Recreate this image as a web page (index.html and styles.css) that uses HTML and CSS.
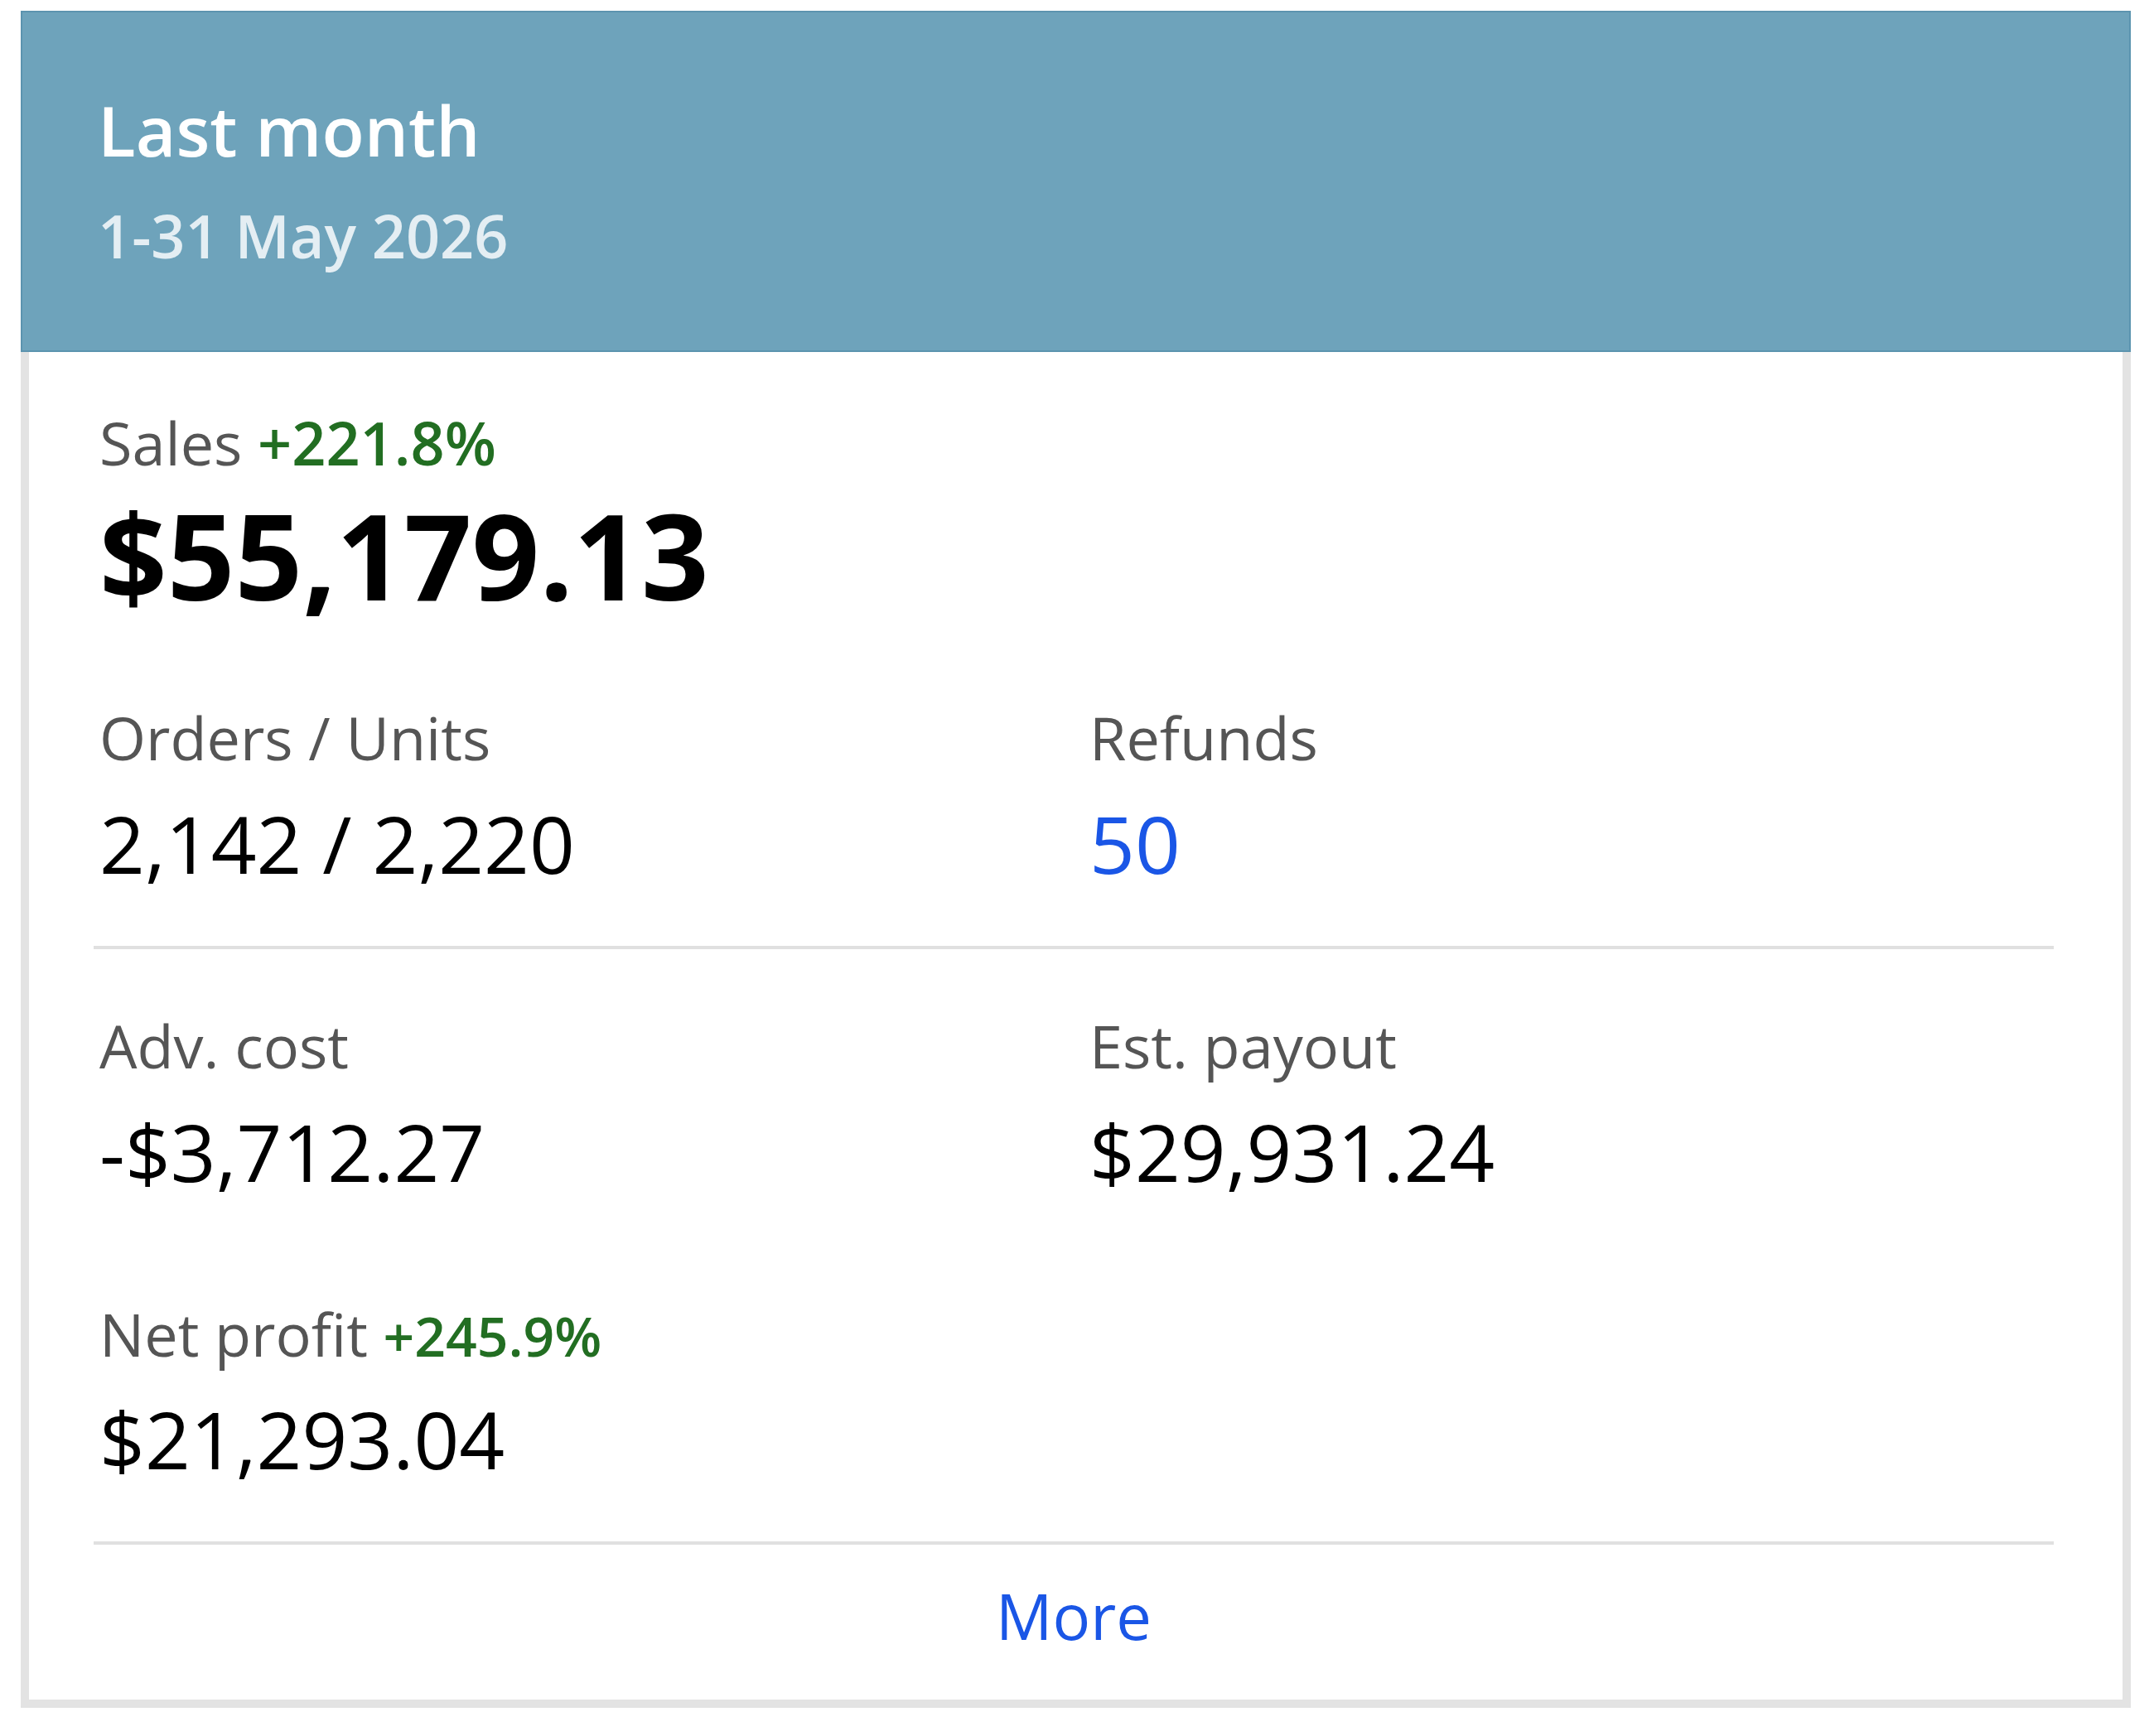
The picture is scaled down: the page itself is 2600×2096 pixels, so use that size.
FILE: index.html
```html
<!DOCTYPE html>
<html lang="en">
<head>
    <meta charset="UTF-8">
    <meta name="viewport" content="width=device-width, initial-scale=1.0">
    <title>Last month</title>
    <link rel="stylesheet" href="styles.css">
</head>
<body>
    <div class="card">
        <div class="card-head">
            <h2 class="period">Last month</h2>
            <p class="range">1-31 May 2026</p>
        </div>
        <div class="card-body">
            <div class="section">
                <div class="metric">
                    <div class="label">Sales <span class="change">+221.8%</span></div>
                    <div class="value big">$55,179.13</div>
                </div>
                <div class="pair">
                    <div class="metric">
                        <div class="label">Orders / Units</div>
                        <div class="value">2,142 / 2,220</div>
                    </div>
                    <div class="metric">
                        <div class="label">Refunds</div>
                        <a class="value link" href="#">50</a>
                    </div>
                </div>
            </div>
            <div class="section second">
                <div class="pair">
                    <div class="metric">
                        <div class="label">Adv. cost</div>
                        <div class="value">-$3,712.27</div>
                    </div>
                    <div class="metric">
                        <div class="label">Est. payout</div>
                        <div class="value">$29,931.24</div>
                    </div>
                </div>
                <div class="metric net">
                    <div class="label">Net profit <span class="change small">+245.9%</span></div>
                    <div class="value">$21,293.04</div>
                </div>
            </div>
            <a class="more" href="#">More</a>
        </div>
    </div>
</body>
</html>
```

FILE: styles.css
```css
body {
    margin: 0;
    padding: 13px 28px 0 25px;
    background-color: #ffffff;
    font-family: "Open Sans", "Noto Sans", sans-serif;
}

.card {
    display: flex;
    flex-direction: column;
}

/* голубая шапка */
.card-head {
    background-color: #6ea3bb;
    border: 2px solid #5c94af;
    padding: 92px 86px 96px 91px;
    color: #ffffff;
}

.period {
    margin: 0;
    font-size: 84px;
    font-weight: 600;
    line-height: 1.2;
}

.range {
    margin: 33px 0 0 0;
    font-size: 72px;
    font-weight: 600;
    line-height: 1.2;
    color: #e4eef3;
}

.card-body {
    border: 10px solid #e3e3e3;
    border-top: none;
    padding: 0 83px 0 78px;
}

.section {
    padding: 63px 0 67px 7px;
    border-bottom: 4px solid #e0e0e0;
}

.section.second {
    padding-top: 70px;
    padding-bottom: 66px;
}

.pair {
    display: grid;
    grid-template-columns: 1fr 1fr;
    column-gap: 31px;
    margin-top: 92px;
}

.section.second .pair {
    margin-top: 0;
}

.metric.net {
    margin-top: 117px;
}

.label {
    font-size: 72px;
    line-height: 1.3;
    color: #555555;
}

.change {
    font-weight: 600;
    color: #226e22;
}

.change.small {
    font-size: 66px;
}

.value {
    display: block;
    margin-top: 22px;
    font-size: 96px;
    line-height: 1.2;
    color: #000000;
}

.value.big {
    margin-top: 6px;
    font-size: 143px;
    font-weight: 700;
    line-height: 1.15;
}

.link {
    color: #1a56e6;
    text-decoration: none;
}

.more {
    display: block;
    padding: 40px 0 56px 0;
    text-align: center;
    font-size: 76px;
    line-height: 1.2;
    color: #1a56e6;
    text-decoration: none;
}
```
